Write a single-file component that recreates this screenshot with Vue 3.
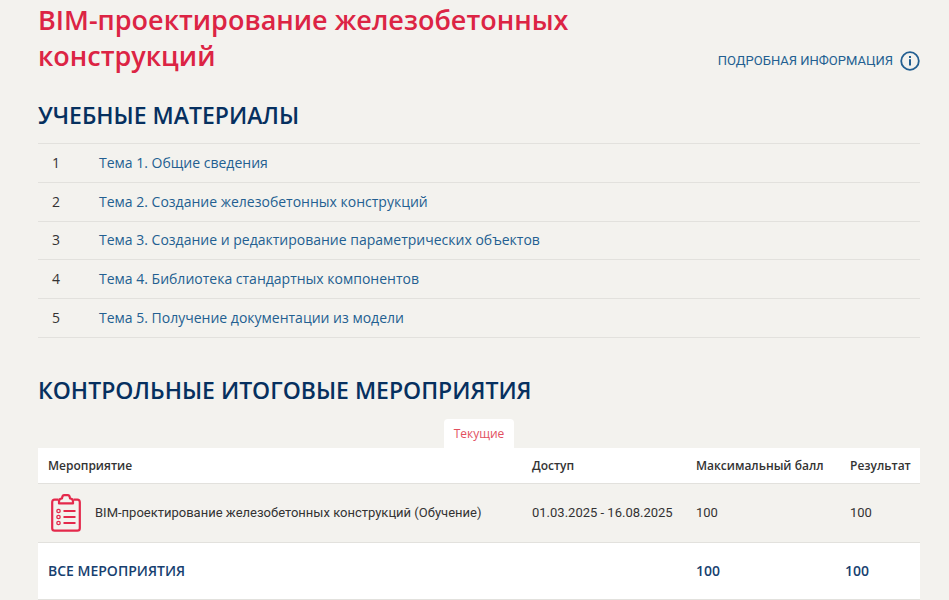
<script setup>
const topics = [
  'Тема 1. Общие сведения',
  'Тема 2. Создание железобетонных конструкций',
  'Тема 3. Создание и редактирование параметрических объектов',
  'Тема 4. Библиотека стандартных компонентов',
  'Тема 5. Получение документации из модели',
]

const events = [
  {
    name: 'BIM-проектирование железобетонных конструкций (Обучение)',
    access: '01.03.2025 - 16.08.2025',
    max: 100,
    result: 100,
  },
]

const bulletRows = [17, 23, 29]
</script>

<template>
  <main class="course">
    <header class="course-head">
      <h1 class="course-title">BIM-проектирование железобетонных конструкций</h1>
      <a class="info-link" href="#info">
        <span>ПОДРОБНАЯ ИНФОРМАЦИЯ</span>
        <svg class="info-icon" viewBox="0 0 20 20" aria-hidden="true">
          <circle cx="10" cy="10" r="8.8" fill="none" stroke="currentColor" stroke-width="1.8" />
          <rect x="9" y="5" width="2" height="2" fill="currentColor" />
          <rect x="9" y="8.2" width="2" height="6.3" fill="currentColor" />
        </svg>
      </a>
    </header>

    <section>
      <h2 class="section-title">УЧЕБНЫЕ МАТЕРИАЛЫ</h2>
      <ol class="topics">
        <li v-for="(topic, i) in topics" :key="topic" class="topic">
          <span class="topic-number">{{ i + 1 }}</span>
          <a class="topic-link" :href="'#topic-' + (i + 1)">{{ topic }}</a>
        </li>
      </ol>
    </section>

    <section class="results">
      <h2 class="section-title">КОНТРОЛЬНЫЕ ИТОГОВЫЕ МЕРОПРИЯТИЯ</h2>
      <div class="tabs">
        <button type="button" class="tab">Текущие</button>
      </div>
      <table class="events">
        <colgroup>
          <col />
          <col class="col-access" />
          <col class="col-max" />
          <col class="col-result" />
        </colgroup>
        <thead>
          <tr>
            <th scope="col">Мероприятие</th>
            <th scope="col">Доступ</th>
            <th scope="col">Максимальный балл</th>
            <th scope="col">Результат</th>
          </tr>
        </thead>
        <tbody>
          <tr v-for="event in events" :key="event.name">
            <td>
              <div class="event">
                <svg class="event-icon" viewBox="0 0 30 38" fill="none" stroke="currentColor" aria-hidden="true">
                  <path
                    d="M7.5 5.7H3.6Q1.2 5.7 1.2 8.2v26q0 2.4 2.4 2.4h22.8q2.4 0 2.4-2.4V8.2q0-2.5-2.4-2.5H22.5"
                    stroke-width="2.2"
                  />
                  <path
                    d="M8 9.4V7.5Q8 4.5 11 4.5Q11.3 1.2 13.3 1.2H16.7Q18.7 1.2 19 4.5Q22 4.5 22 7.5V9.4Z"
                    stroke-width="2.2"
                    stroke-linejoin="round"
                  />
                  <g v-for="y in bulletRows" :key="y">
                    <circle cx="7.5" :cy="y" r="1.7" stroke-width="1.3" />
                    <path :d="`M12.5 ${y}H24.5`" stroke-width="2" />
                  </g>
                </svg>
                <span>{{ event.name }}</span>
              </div>
            </td>
            <td>{{ event.access }}</td>
            <td>{{ event.max }}</td>
            <td>{{ event.result }}</td>
          </tr>
        </tbody>
        <tfoot>
          <tr>
            <th scope="row" colspan="2">ВСЕ МЕРОПРИЯТИЯ</th>
            <td>100</td>
            <td>100</td>
          </tr>
        </tfoot>
      </table>
    </section>
  </main>
</template>

<style>
body {
  background: #f3f2ee;
}
</style>

<style scoped>
.course {
  padding: 2px 29px 0 38px;
  font-family: "Open Sans", "Noto Sans", sans-serif;
  font-size: 12px;
  color: #333;
}

.course-head {
  display: flex;
  justify-content: space-between;
  align-items: flex-end;
  gap: 24px;
}

.course-title {
  max-width: 560px;
  margin: 0;
  font-size: 27px;
  line-height: 36px;
  font-weight: 600;
  color: #dc2444;
}

.info-link {
  display: flex;
  align-items: center;
  gap: 7px;
  padding-bottom: 3px;
  font-family: Roboto, "Open Sans", sans-serif;
  font-size: 13px;
  line-height: 20px;
  color: #235f91;
  text-decoration: none;
  white-space: nowrap;
}

.info-icon {
  width: 20px;
  height: 20px;
}

.section-title {
  margin: 25px 0 12px;
  font-size: 23px;
  line-height: 32px;
  font-weight: 600;
  color: #06305f;
}

.topics {
  display: grid;
  grid-auto-rows: 1fr;
  min-height: 194px;
  margin: 0;
  padding: 0;
  border-top: 1px solid #e2e1dd;
  list-style: none;
  font-size: 14px;
  line-height: 20px;
}

.topic {
  display: grid;
  grid-template-columns: 36px 1fr;
  align-items: center;
  column-gap: 25px;
  border-bottom: 1px solid #e2e1dd;
}

.topic-number {
  text-align: center;
}

.topic-link {
  color: #235f91;
  text-decoration: none;
}

.results {
  margin-top: 36px;
}

.tabs {
  display: flex;
  justify-content: center;
  padding-top: 1px;
}

.tab {
  padding: 0 10px;
  border: 0;
  border-radius: 4px 4px 0 0;
  background: #fff;
  font: inherit;
  line-height: 29px;
  color: #e2505f;
}

.events {
  width: 100%;
  border-collapse: collapse;
  table-layout: fixed;
  line-height: 20px;
}

.col-access {
  width: 164px;
}

.col-max {
  width: 154px;
}

.col-result {
  width: 80px;
}

.events th,
.events td {
  padding: 0 10px;
  border-bottom: 1px solid #e2e1dd;
  text-align: left;
  white-space: nowrap;
}

.events thead th {
  height: 35px;
  background: #fff;
  font-weight: 600;
}

.events tbody td {
  height: 58px;
  font-family: Roboto, "Open Sans", sans-serif;
  font-size: 13px;
}

.event {
  display: flex;
  align-items: center;
  gap: 14px;
  padding-left: 3px;
}

.event-icon {
  flex: none;
  width: 30px;
  height: 38px;
  color: #e4294b;
}

.events tfoot th,
.events tfoot td {
  height: 56px;
  background: #fff;
  font-size: 14px;
  font-weight: 600;
  color: #173f70;
}

.events tfoot td:last-child {
  padding-left: 5px;
}
</style>
